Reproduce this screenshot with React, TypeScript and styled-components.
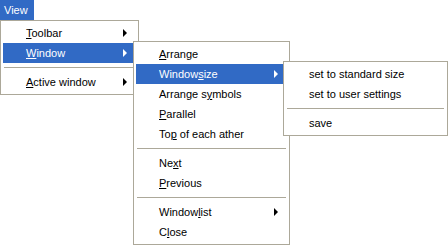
import React from "react";
import styled, { createGlobalStyle } from "styled-components";

const GlobalStyle = createGlobalStyle`
  html, body {
    margin: 0;
    padding: 0;
    background: #ffffff;
  }
  body {
    font-family: "Liberation Sans", Arial, sans-serif;
    font-size: 11px;
    color: #000000;
  }
`;

const Page = styled.div`
  position: relative;
  width: 448px;
  height: 245px;
  overflow: hidden;
  background: #ffffff;
`;

const MenuBar = styled.div`
  display: flex;
  height: 20px;
  background: #ffffff;
`;

const BarItem = styled.div`
  display: flex;
  align-items: center;
  width: 34px;
  padding-left: 4px;
  box-sizing: border-box;
  background: #316ac5;
  color: #ffffff;
`;

const Menu = styled.div<{ $left: number; $top: number; $width: number }>`
  position: absolute;
  left: ${(p) => p.$left}px;
  top: ${(p) => p.$top}px;
  width: ${(p) => p.$width}px;
  box-sizing: border-box;
  display: flex;
  flex-direction: column;
  padding: 2px;
  background: #ffffff;
  border: 1px solid #aca899;
`;

const Item = styled.div<{ $active?: boolean }>`
  display: flex;
  align-items: center;
  justify-content: space-between;
  height: 20px;
  padding: 0 9px 0 23px;
  background: ${(p) => (p.$active ? "#316ac5" : "transparent")};
  color: ${(p) => (p.$active ? "#ffffff" : "#000000")};
  white-space: nowrap;
`;

const Key = styled.span`
  text-decoration: underline;
`;

const Arrow = styled.span<{ $active?: boolean }>`
  width: 0;
  height: 0;
  border-top: 4px solid transparent;
  border-bottom: 4px solid transparent;
  border-left: 4px solid ${(p) => (p.$active ? "#ffffff" : "#000000")};
`;

const Separator = styled.div`
  height: 1px;
  margin: 4px 1px;
  background: #aca899;
`;

type Entry =
  | { kind: "item"; label: React.ReactNode; sub?: boolean; active?: boolean }
  | { kind: "sep" };

const u = (s: string) => <Key>{s}</Key>;

const viewMenu: Entry[] = [
  { kind: "item", label: <>{u("T")}oolbar</>, sub: true },
  { kind: "item", label: <>{u("W")}indow</>, sub: true, active: true },
  { kind: "sep" },
  { kind: "item", label: <>{u("A")}ctive window</>, sub: true },
];

const windowMenu: Entry[] = [
  { kind: "item", label: <>{u("A")}rrange</> },
  { kind: "item", label: <>Window{u("s")}ize</>, sub: true, active: true },
  { kind: "item", label: <>Arrange s{u("y")}mbols</> },
  { kind: "item", label: <>{u("P")}arallel</> },
  { kind: "item", label: <>To{u("p")} of each ather</> },
  { kind: "sep" },
  { kind: "item", label: <>Ne{u("x")}t</> },
  { kind: "item", label: <>{u("P")}revious</> },
  { kind: "sep" },
  { kind: "item", label: <>Window{u("l")}ist</>, sub: true },
  { kind: "item", label: <>C{u("l")}ose</> },
];

const sizeMenu: Entry[] = [
  { kind: "item", label: "set to standard size" },
  { kind: "item", label: "set to user settings" },
  { kind: "sep" },
  { kind: "item", label: "save" },
];

const MenuList = ({
  entries,
  left,
  top,
  width,
}: {
  entries: Entry[];
  left: number;
  top: number;
  width: number;
}) => (
  <Menu $left={left} $top={top} $width={width}>
    {entries.map((e, i) =>
      e.kind === "sep" ? (
        <Separator key={i} />
      ) : (
        <Item key={i} $active={e.active}>
          <span>{e.label}</span>
          {e.sub && <Arrow $active={e.active} />}
        </Item>
      )
    )}
  </Menu>
);

const App = () => {
  return (
    <Page>
      <GlobalStyle />
      <MenuBar>
        <BarItem>View</BarItem>
      </MenuBar>
      <MenuList entries={viewMenu} left={0} top={20} width={139} />
      <MenuList entries={windowMenu} left={133} top={41} width={157} />
      <MenuList entries={sizeMenu} left={283} top={61} width={165} />
    </Page>
  );
};

export default App;
